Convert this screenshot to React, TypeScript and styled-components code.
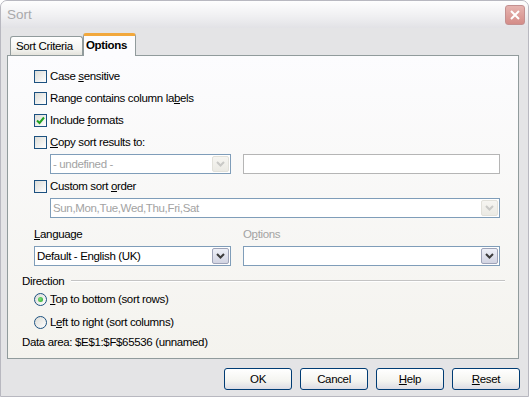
import React from "react";
import styled, { createGlobalStyle } from "styled-components";

const GlobalStyle = createGlobalStyle`
  html, body {
    margin: 0;
    padding: 0;
    background: #ffffff;
  }
  body {
    font-family: "Liberation Sans", Arial, sans-serif;
    font-size: 11.5px;
    letter-spacing: -0.35px;
    color: #000000;
  }
`;

const Window = styled.div`
  width: 529px;
  height: 397px;
  box-sizing: border-box;
  border: 1px solid #b8b8c0;
  border-radius: 7px 7px 0 0;
  background: #e4e4e6;
  display: flex;
  flex-direction: column;
  overflow: hidden;
`;

const TitleBar = styled.div`
  height: 27px;
  flex: none;
  display: flex;
  align-items: center;
  justify-content: space-between;
  padding: 0 3px 0 6px;
  background: linear-gradient(#fefefe, #f0f0f2 55%, #e2e2e6);
`;

const Title = styled.span`
  font-size: 13.5px;
  letter-spacing: 0;
  color: #a9a9ab;
`;

const CloseButton = styled.div`
  width: 20px;
  height: 20px;
  box-sizing: border-box;
  border: 1px solid #c39090;
  border-radius: 3px;
  background: linear-gradient(#e6b4b0, #d48c88);
  display: flex;
  align-items: center;
  justify-content: center;
`;

const Body = styled.div`
  flex: 1;
  display: flex;
  flex-direction: column;
  padding: 5px 9px 0 6px;
`;

const TabStrip = styled.div`
  display: flex;
  align-items: flex-end;
  padding-left: 3px;
  height: 22px;
`;

const Tab = styled.div<{ $active?: boolean }>`
  box-sizing: border-box;
  display: flex;
  align-items: center;
  border: 1px solid #919b9c;
  border-bottom: none;
  border-radius: 3px 3px 0 0;
  ${(p) =>
    p.$active
      ? `
    position: relative;
    z-index: 1;
    width: 53px;
    height: 23px;
    margin-bottom: -1px;
    padding: 0 0 2px 2px;
    font-weight: bold;
    background: #fcfcfe;
    border-top: 3px solid #f2a83c;
  `
      : `
    width: 73px;
    height: 19px;
    padding-left: 5px;
    background: linear-gradient(#ffffff, #f2f2ee 70%, #e4e3dc);
  `}
`;

const Panel = styled.div`
  height: 304px;
  box-sizing: border-box;
  border: 1px solid #919b9c;
  background: linear-gradient(#fcfcfe, #f4f3ee);
  display: flex;
  flex-direction: column;
  padding: 9px 13px 0 14px;
`;

const Row = styled.div<{ $top?: number; $h?: number; $indent?: number }>`
  display: flex;
  align-items: center;
  gap: 3px;
  height: ${(p) => p.$h ?? 22}px;
  margin-top: ${(p) => p.$top ?? 0}px;
  padding-left: ${(p) => p.$indent ?? 12}px;
`;

const FieldRow = styled.div<{ $top?: number; $indent?: number; $h?: number }>`
  display: grid;
  grid-template-columns: ${(p) => (p.$indent === 12 ? 197 : 181)}px 257px;
  column-gap: 12px;
  align-items: center;
  height: ${(p) => p.$h ?? 20}px;
  margin-top: ${(p) => p.$top ?? 0}px;
  padding-left: ${(p) => p.$indent ?? 28}px;
`;

const CheckBox = styled.div`
  width: 13px;
  height: 13px;
  box-sizing: border-box;
  border: 1px solid #1c5180;
  background: linear-gradient(135deg, #dcdcd7, #ffffff);
  display: flex;
  align-items: center;
  justify-content: center;
  flex: none;
`;

const RadioBox = styled(CheckBox)`
  border-radius: 50%;
`;

const RadioDot = styled.div`
  width: 5px;
  height: 5px;
  border-radius: 50%;
  background: radial-gradient(circle at 40% 40%, #7ee07e, #21a121);
`;

const Label = styled.span<{ $muted?: boolean }>`
  color: ${(p) => (p.$muted ? "#a3a3a3" : "#000000")};
  white-space: nowrap;
`;

const Select = styled.div<{ $disabled?: boolean; $span?: boolean }>`
  height: 20px;
  box-sizing: border-box;
  border: 1px solid #7f9db9;
  background: #ffffff;
  display: flex;
  align-items: center;
  justify-content: space-between;
  padding: 0 1px 0 2px;
  color: ${(p) => (p.$disabled ? "#a3a3a3" : "#000000")};
  ${(p) => (p.$span ? "grid-column: 1 / span 2;" : "")}
`;

const DropButton = styled.div<{ $disabled?: boolean }>`
  width: 17px;
  height: 16px;
  box-sizing: border-box;
  border: 1px solid ${(p) => (p.$disabled ? "#e2e1da" : "#9ea3b8")};
  border-radius: 2px;
  background: ${(p) =>
    p.$disabled
      ? "linear-gradient(#f6f5f1, #ebeae4)"
      : "linear-gradient(#eef0f8, #d2d4e2)"};
  display: flex;
  align-items: center;
  justify-content: center;
  color: ${(p) => (p.$disabled ? "#c9c9c6" : "#3c3c3c")};
`;

const TextField = styled.div`
  height: 20px;
  box-sizing: border-box;
  border: 1px solid #b5b5b5;
  background: #ffffff;
`;

const SectionHead = styled.div`
  display: flex;
  align-items: center;
  gap: 7px;
  height: 16px;
  margin-top: 7px;
`;

const Rule = styled.div`
  flex: 1;
  height: 0;
  border-top: 1px solid #c4c4c4;
  border-bottom: 1px solid #ffffff;
`;

const Footer = styled.div`
  display: flex;
  justify-content: flex-end;
  gap: 8px;
  padding-top: 9px;
  margin-right: -1px;
`;

const Button = styled.div`
  width: 68px;
  height: 22px;
  box-sizing: border-box;
  border: 1px solid #003c74;
  border-radius: 3px;
  background: linear-gradient(#ffffff, #f4f4f0 60%, #dcdce4);
  display: flex;
  align-items: center;
  justify-content: center;
`;

const Chevron = () => (
  <svg width="9" height="6" viewBox="0 0 9 6">
    <path d="M1 1 L4.5 4.5 L8 1" fill="none" stroke="currentColor" strokeWidth="2" />
  </svg>
);

const Check = () => (
  <svg width="9" height="9" viewBox="0 0 9 9">
    <path d="M1 4.5 L3.5 7 L8 1.5" fill="none" stroke="#21a121" strokeWidth="2" />
  </svg>
);

const Dropdown: React.FC<{ text?: string; disabled?: boolean; span?: boolean }> = ({
  text = "",
  disabled,
  span,
}) => (
  <Select $disabled={disabled} $span={span}>
    <span>{text}</span>
    <DropButton $disabled={disabled}>
      <Chevron />
    </DropButton>
  </Select>
);

const CheckItem: React.FC<{ checked?: boolean; top?: number; children: React.ReactNode }> = ({
  checked,
  top,
  children,
}) => (
  <Row $top={top}>
    <CheckBox>{checked && <Check />}</CheckBox>
    <Label>{children}</Label>
  </Row>
);

export default function App() {
  return (
    <>
      <GlobalStyle />
      <Window>
        <TitleBar>
          <Title>Sort</Title>
          <CloseButton>
            <svg width="12" height="12" viewBox="0 0 12 12">
              <path d="M2 2 L10 10 M10 2 L2 10" stroke="#ffffff" strokeWidth="2" />
            </svg>
          </CloseButton>
        </TitleBar>
        <Body>
          <TabStrip>
            <Tab>Sort Criteria</Tab>
            <Tab $active>Options</Tab>
          </TabStrip>
          <Panel>
            <CheckItem>
              Case <u>s</u>ensitive
            </CheckItem>
            <CheckItem>
              Range contains column la<u>b</u>els
            </CheckItem>
            <CheckItem checked>
              Include <u>f</u>ormats
            </CheckItem>
            <CheckItem>
              <u>C</u>opy sort results to:
            </CheckItem>
            <FieldRow $top={1}>
              <Dropdown text="- undefined -" disabled />
              <TextField />
            </FieldRow>
            <CheckItem top={1}>
              Custom sort <u>o</u>rder
            </CheckItem>
            <FieldRow $top={1}>
              <Dropdown text="Sun,Mon,Tue,Wed,Thu,Fri,Sat" disabled span />
            </FieldRow>
            <FieldRow $top={8} $indent={12} $h={16}>
              <Label>
                <u>L</u>anguage
              </Label>
              <Label $muted>
                O<u>p</u>tions
              </Label>
            </FieldRow>
            <FieldRow $top={4} $indent={12}>
              <Dropdown text="Default - English (UK)" />
              <Dropdown />
            </FieldRow>
            <SectionHead>
              <Label>Direction</Label>
              <Rule />
            </SectionHead>
            <Row $h={20}>
              <RadioBox>
                <RadioDot />
              </RadioBox>
              <Label>
                <u>T</u>op to bottom (sort rows)
              </Label>
            </Row>
            <Row $h={20} $top={3}>
              <RadioBox />
              <Label>
                L<u>e</u>ft to right (sort columns)
              </Label>
            </Row>
            <Row $h={16} $top={2} $indent={0}>
              <Label>Data area: $E$1:$F$65536 (unnamed)</Label>
            </Row>
          </Panel>
          <Footer>
            <Button>OK</Button>
            <Button>Cancel</Button>
            <Button>
              <span>
                <u>H</u>elp
              </span>
            </Button>
            <Button>
              <span>
                <u>R</u>eset
              </span>
            </Button>
          </Footer>
        </Body>
      </Window>
    </>
  );
}
